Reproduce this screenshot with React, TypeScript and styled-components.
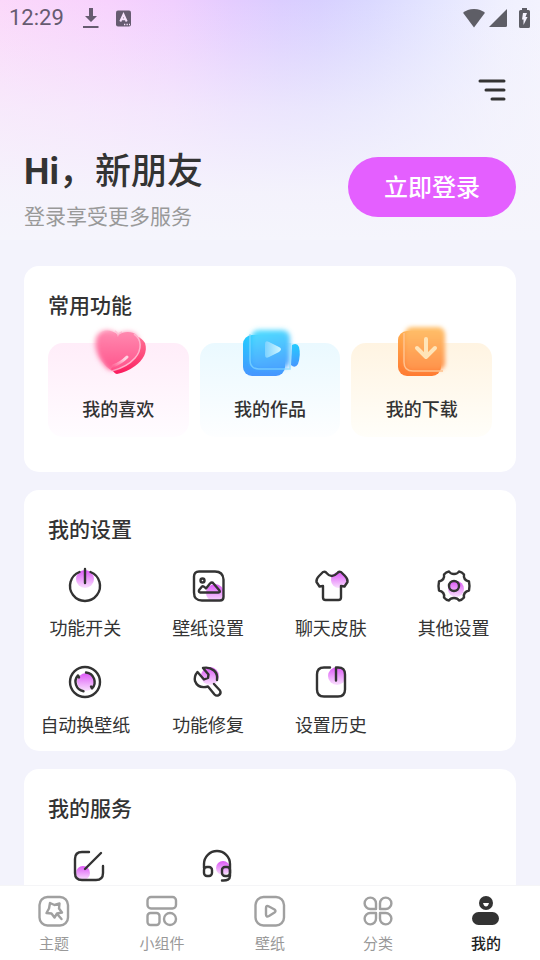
import React from "react";
import styled, { createGlobalStyle } from "styled-components";

const GlobalStyle = createGlobalStyle`
  *, *::before, *::after { box-sizing: border-box; }
  body {
    margin: 0;
    background: #f3f3fc;
    color: #333333;
    font-family: "Noto Sans CJK SC", sans-serif;
  }
  button { font: inherit; color: inherit; border: 0; padding: 0; background: none; cursor: pointer; }
  h1, h2, p { margin: 0; }
  svg { display: block; flex: none; overflow: visible; }
`;

const Screen = styled.div`
  display: flex;
  flex-direction: column;
  height: 100vh;
  overflow: hidden;
`;

const Content = styled.main`
  flex: 1;
  min-height: 0;
  overflow-y: auto;
  scrollbar-width: none;
`;

const Header = styled.header`
  height: 240px;
  background:
    linear-gradient(to bottom, rgba(245, 244, 252, 0) 0%, rgba(245, 244, 252, 0.24) 18%, rgba(245, 244, 252, 0.62) 45%, rgba(245, 244, 252, 0.95) 80%, #f5f5fc 100%),
    linear-gradient(to right, #fbd8fa 0%, #f7d2fd 20%, #f0cffe 32%, #e4ccff 43%, #dbcdff 52%, #d8d0ff 59%, #dad8ff 68%, #e4e5ff 80%, #f0f0fe 93%, #f3f3fe 100%);
`;

const StatusBar = styled.div`
  display: flex;
  align-items: center;
  justify-content: space-between;
  height: 36px;
  padding: 0 10px 0 9px;
  color: #665b70;
`;

const StatusGroup = styled.div<{ $gap: number }>`
  display: flex;
  align-items: center;
  gap: ${(p) => p.$gap}px;
`;

const Clock = styled.span`
  font: 400 22px/36px Roboto, sans-serif;
`;

const Toolbar = styled.div`
  display: flex;
  justify-content: flex-end;
  padding: 38px 32px 0;
`;

const MenuButton = styled.button`
  display: grid;
  place-items: center;
  width: 32px;
  height: 32px;
`;

const Profile = styled.div`
  display: flex;
  align-items: center;
  justify-content: space-between;
  padding: 37px 24px 0;
`;

const Greeting = styled.h1`
  font-size: 36px;
  font-weight: 500;
  line-height: 50px;
`;

const Latin = styled.span`
  font-family: Roboto, sans-serif;
  font-weight: 700;
  line-height: 1;
`;

const Subtitle = styled.p`
  font-size: 21px;
  line-height: 32px;
  padding-top: 6px;
  color: #999999;
`;

const LoginButton = styled.button`
  && {
    width: 168px;
    height: 60px;
    padding-bottom: 4px;
    border-radius: 30px;
    background: #e45fff;
    color: #ffffff;
    font-size: 24px;
    font-weight: 500;
  }
`;

const Cards = styled.div`
  display: flex;
  flex-direction: column;
  gap: 18px;
  padding: 26px 24px 0;
`;

const Card = styled.section<{ $bottom: number }>`
  border-radius: 15px;
  background: #ffffff;
  padding: 24px 0 ${(p) => p.$bottom}px;
`;

const CardTitle = styled.h2`
  padding: 0 24px;
  font-size: 21px;
  font-weight: 500;
  line-height: 28px;
`;

const Tiles = styled.div`
  display: grid;
  grid-template-columns: repeat(3, 1fr);
  gap: 11px;
  padding: 25px 24px 0;
`;

const Tile = styled.button<{ $from: string; $to: string }>`
  && {
    display: flex;
    flex-direction: column;
    align-items: center;
    height: 94px;
    border-radius: 15px;
    background: linear-gradient(to bottom, ${(p) => p.$from}, ${(p) => p.$to});
    font-size: 18px;
    font-weight: 500;
    line-height: 26px;
  }
  svg { margin-top: -20px; margin-bottom: 16px; }
`;

const ActionGrid = styled.div<{ $columns: string }>`
  display: grid;
  grid-template-columns: ${(p) => p.$columns};
  row-gap: 27px;
  padding: 26px 1px 0 0;
`;

const Action = styled.button`
  && {
    display: flex;
    flex-direction: column;
    align-items: center;
    gap: 13px;
    font-size: 18px;
    line-height: 21px;
    white-space: nowrap;
  }
`;

const TabBar = styled.nav`
  display: grid;
  grid-template-columns: repeat(5, 1fr);
  height: 75px;
  flex: none;
  background: #ffffff;
  border-top: 1px solid #f5f5f7;
`;

const Tab = styled.button<{ $active?: boolean }>`
  && {
    display: flex;
    flex-direction: column;
    align-items: center;
    gap: 5px;
    padding-top: 9px;
    font-size: 15px;
    line-height: 22px;
    font-weight: ${(p) => (p.$active ? 500 : 400)};
    color: ${(p) => (p.$active ? "#222222" : "#999999")};
  }
`;

const DownloadIcon = () => (
  <svg width="16" height="22" viewBox="0 0 16 22" fill="currentColor">
    <path d="M6 1h4v8h4l-6 6-6-6h4z" />
    <path d="M0 19h15.500v2H0z" />
  </svg>
);

const KeyboardIcon = () => (
  <svg width="15" height="17" viewBox="0 0 15 17">
    <rect y="0.500" width="15" height="16" rx="2" fill="currentColor" />
    <path d="M4.300 11.500 7.500 4.500l3.200 7M5.400 9.300h4.200" fill="none" stroke="#f7e2fc" strokeWidth="2" />
    <path d="M8 14.500h1.300M10.500 14.500h1.300M13 14.500h1" stroke="#f7e2fc" strokeWidth="1.300" />
  </svg>
);

const WifiIcon = () => (
  <svg width="22" height="19" viewBox="0 0 22 19">
    <path d="M11 0C6.500 0 2.800 1.500 0 3.800L11 18.500 22 3.800C19.200 1.500 15.500 0 11 0Z" fill="#5e5e66" />
  </svg>
);

const SignalIcon = () => (
  <svg width="18" height="18" viewBox="0 0 18 18">
    <path d="M18 0v16.500q0 1.500-1.500 1.500H0Z" fill="#5e5e66" />
  </svg>
);

const BatteryIcon = () => (
  <svg width="11" height="20" viewBox="0 0 11 20">
    <path d="M3 0h5v2h1.500Q11 2 11 3.500v15Q11 20 9.500 20h-8Q0 20 0 18.500v-15Q0 2 1.500 2H3Z" fill="#5e5e66" />
    <path d="M4 5h4L6.500 9H8.500L4.500 17V11.500H3Z" fill="#f5f4ff" />
  </svg>
);

const MenuIcon = () => (
  <svg width="28" height="24" viewBox="0 0 28 24" fill="none" stroke="#333" strokeWidth="3" strokeLinecap="round">
    <path d="M2 3h24M8 12h18M14 21h12" />
  </svg>
);

const HeartIcon = () => (
  <svg width="60" height="56" viewBox="0 -1 60 56">
    <defs>
      <linearGradient id="heartBack" x1="0.800" y1="0" x2="0.400" y2="1">
        <stop offset="0" stopColor="#ff6a90" />
        <stop offset="1" stopColor="#fb1d5e" />
      </linearGradient>
      <linearGradient id="heartFront" gradientUnits="userSpaceOnUse" x1="30" y1="5" x2="30" y2="50">
        <stop offset="0" stopColor="#ff8db2" />
        <stop offset="1" stopColor="#ff4f88" />
      </linearGradient>
      <linearGradient id="heartEdge" gradientUnits="userSpaceOnUse" x1="22" y1="0" x2="50" y2="0">
        <stop offset="0" stopColor="#ffc4d8" stopOpacity="0.500" />
        <stop offset="0.500" stopColor="#ffb4cd" />
      </linearGradient>
      <linearGradient id="heartShine" x1="0" y1="1" x2="1" y2="0">
        <stop offset="0" stopColor="#ffc4d8" stopOpacity="0.100" />
        <stop offset="0.800" stopColor="#ffd3e2" />
      </linearGradient>
      <linearGradient id="heartReveal" gradientUnits="userSpaceOnUse" x1="10" y1="24" x2="30" y2="24">
        <stop offset="0" stopColor="#000" />
        <stop offset="1" stopColor="#fff" />
      </linearGradient>
      <mask id="heartMask" maskUnits="userSpaceOnUse" x="0" y="0" width="60" height="56">
        <rect width="60" height="56" fill="url(#heartReveal)" />
      </mask>
      <filter id="heartBlur" x="-30%" y="-30%" width="160%" height="160%"><feGaussianBlur stdDeviation="2.800" /></filter>
    </defs>
    <path d="M48 12q6 2 9 7c3 9-2 17-10 23q-8 6-18 8-2 0-6-5Z" fill="url(#heartBack)" />
    <path d="M30 11C23 4 11 5 8 14 5 27 14 40 22 46c16-4 28-13 29-26C52 8 39 5 30 11Z" fill="url(#heartFront)" filter="url(#heartBlur)" />
    <path d="M30 11C23 4 11 5 8 14 5 27 14 40 24 47c16-4 28-13 28-26C53 8 39 5 30 11Z" fill="url(#heartFront)" mask="url(#heartMask)" />
    <path d="M27 7q2 1 3 4 1-2 4-3M46 10c8 5 8 16 1 24q-8 9-23 13" fill="none" stroke="url(#heartEdge)" strokeWidth="1.500" />
    <path d="M25 42q8-3 14-9" fill="none" stroke="url(#heartShine)" strokeWidth="3" strokeLinecap="round" />
  </svg>
);

const VideoIcon = () => (
  <svg width="60" height="56" viewBox="0 0 60 56">
    <defs>
      <linearGradient id="videoBack" x1="0" y1="0" x2="0" y2="1">
        <stop offset="0" stopColor="#22ccff" />
        <stop offset="1" stopColor="#4796ff" />
      </linearGradient>
      <linearGradient id="videoFront" x1="0.300" y1="0" x2="0.500" y2="1">
        <stop offset="0" stopColor="#50dcff" />
        <stop offset="1" stopColor="#4da5ff" />
      </linearGradient>
      <linearGradient id="videoPlay" x1="0" y1="0" x2="1" y2="0">
        <stop offset="0" stopColor="#7dd2ff" />
        <stop offset="1" stopColor="#d2f7ff" />
      </linearGradient>
      <filter id="videoBlur" x="-20%" y="-20%" width="140%" height="140%"><feGaussianBlur stdDeviation="2.800" /></filter>
    </defs>
    <path d="M52 22q5-3 7 2 2 8-1 17-3 5-7 1Z" fill="url(#videoBack)" />
    <rect x="3" y="12" width="42" height="41" rx="9" fill="url(#videoBack)" />
    <rect x="11" y="7" width="39" height="38" rx="8" fill="url(#videoFront)" filter="url(#videoBlur)" />
    <path d="M10 11v26q0 9 9 9h31V20" fill="none" stroke="#83d8ff" strokeWidth="1.500" strokeOpacity="0.700" />
    <path d="M25 21q0-4 4-2l10 5q4 2 0 5l-10 5q-4 2-4-2Z" fill="url(#videoPlay)" />
  </svg>
);

const SaveIcon = () => (
  <svg width="60" height="56" viewBox="0 3 60 56">
    <defs>
      <linearGradient id="saveBack" x1="0" y1="0" x2="0" y2="1">
        <stop offset="0" stopColor="#ffad50" />
        <stop offset="1" stopColor="#ff7b32" />
      </linearGradient>
      <linearGradient id="saveFront" x1="0.500" y1="0" x2="0.500" y2="1">
        <stop offset="0" stopColor="#ffc06a" />
        <stop offset="1" stopColor="#ff924b" />
      </linearGradient>
      <filter id="saveBlur" x="-20%" y="-20%" width="140%" height="140%"><feGaussianBlur stdDeviation="2" /></filter>
    </defs>
    <rect x="6" y="11" width="43" height="45" rx="9" fill="url(#saveBack)" />
    <rect x="13" y="7" width="40" height="43" rx="7" fill="url(#saveFront)" filter="url(#saveBlur)" />
    <path d="M12 13v29q0 9 9 9h30" fill="none" stroke="#ffc28f" strokeWidth="1.500" />
    <path d="M34 19v18M25 28l9 9 9-9" fill="none" stroke="#ffe4b8" strokeWidth="4" strokeLinecap="round" strokeLinejoin="round" />
  </svg>
);

function ActionIcon({ cx, cy, r = 9, children }: { cx: number; cy: number; r?: number; children: React.ReactNode }) {
  const id = React.useId();
  return (
    <svg width="36" height="36" viewBox="0 0 36 36" fill="none" stroke="#333" strokeWidth="2.400" strokeLinecap="round" strokeLinejoin="round">
      <linearGradient id={id} x1="0" y1="0" x2="0" y2="1">
        <stop offset="0" stopColor="#dd57f6" />
        <stop offset="1" stopColor="#f9e0fe" />
      </linearGradient>
      <circle cx={cx} cy={cy} r={r} fill={`url(#${id})`} stroke="none" />
      {children}
    </svg>
  );
}

const settings = [
  { label: "功能开关", icon: <ActionIcon cx={18} cy={11}><path d="M12.500 4a15 15 0 1 0 11 0M18 1v14" /></ActionIcon> },
  { label: "壁纸设置", icon: <ActionIcon cx={25} cy={25}><path d="M9 3.500h16q8 0 8.500 8V29q0 3.500-3.500 3.500H12q-8 0-8-8v-16q0-5 5-5Z" /><circle cx="12.500" cy="12.500" r="2" /><path d="M10 24.500q-2-1-.5-3l2.500-3q1-1 3 1l1 1 4-5q2-2 3.500 0l6 7q1 2-1 2Z" /></ActionIcon> },
  { label: "聊天皮肤", icon: <ActionIcon cx={26} cy={12} r={8}><path d="M10 4q2.500-1 3.500 1 5 6 11 0 1-2 3.500-1l4 4q3 3 2.500 6l-3 4.500-3.500-.5v11.500q0 2.500-2.500 2.500h-13q-2.500 0-2.500-2.500V18l-3.500.5-3-4.500q-.5-3 2.500-6Z" /></ActionIcon> },
  { label: "其他设置", icon: <ActionIcon cx={20} cy={21} r={8}><path d="M13 3.500q1.500 2.500 5 2.500t5-2.500q3 .5 5 3-1 5.500 5 7 1 4.500 0 9-6 1.500-5 7-2 2.500-5 3-1.500-2.500-5-2.500t-5 2.500q-3-.5-5-3 1-5.500-5-7-1-4.500 0-9 6-1.500 5-7 2-2.500 5-3Z" /><circle cx="18" cy="18" r="5" /></ActionIcon> },
  { label: "自动换壁纸", icon: <ActionIcon cx={19} cy={17}><circle cx="18" cy="17" r="15" /><path d="M16.500 26.200a9.500 9.500 0 0 1-5.500-15.800l1 2M19 7.500a9.500 9.500 0 0 1 6 16l-1-2" /></ActionIcon> },
  { label: "功能修复", icon: <ActionIcon cx={20} cy={11}><path d="M27 15q1-6-3-9.500-5-4-11-2.500l5.500 6.500-.5 3.500-4 1.500L7.500 7q-3.500 4-2.500 9 3 8 13 5.500l6.500 8q2 2 4.500.5 2.500-2 1-4.500L24 19" /></ActionIcon> },
  { label: "设置历史", icon: <ActionIcon cx={24} cy={11}><path d="M17 2.500H11q-7 0-7 7v15q0 7 7 7h14q7 0 7-7v-15q0-7-7-7h-2v13" /></ActionIcon> },
];

const services = [
  { label: "意见反馈", icon: <ActionIcon cx={13} cy={26} r={7}><path d="M19 5h-7q-7 0-7 7v14q0 7 7 7h14q7 0 7-7v-7M31 6 15 22" /></ActionIcon> },
  { label: "联系客服", icon: <ActionIcon cx={25} cy={21} r={7}><path d="M6 21v-4a13 13 0 0 1 26 0v12q0 5-8 4.500" /><rect x="6" y="20" width="8" height="9" rx="3" /><rect x="24" y="20" width="8" height="9" rx="3" /></ActionIcon> },
];

const TabIcon = ({ children }: { children: React.ReactNode }) => (
  <svg width="32" height="32" viewBox="0 0 32 32" fill="none" stroke="#a0a0a0" strokeWidth="2.400" strokeLinecap="round" strokeLinejoin="round">
    {children}
  </svg>
);

const tabs = [
  { label: "主题", icon: <TabIcon><rect x="1.500" y="2" width="28.500" height="28.500" rx="8" /><path d="m12 8 4.500 2 5-1.500-.5 5 3 4-5 1-2.500 4-3-4-5-.5 2.500-4.500ZM20 20l3.500 4" /></TabIcon> },
  { label: "小组件", icon: <TabIcon><rect x="1.500" y="2" width="28.500" height="11.500" rx="3.500" /><rect x="1.500" y="18" width="12" height="12" rx="3" /><circle cx="24" cy="24" r="6" /></TabIcon> },
  { label: "壁纸", icon: <TabIcon><rect x="1.500" y="2" width="28.500" height="28.500" rx="8" /><path d="M12 13q0-3 3-1.500l5.500 3q2 1.500 0 3L15 21q-3 1.500-3-1.500Z" /></TabIcon> },
  { label: "分类", icon: <TabIcon><path d="M14 14H8.500a5.700 5.700 0 1 1 5.500-5.500ZM18 14V8.500A5.700 5.700 0 1 1 23.500 14ZM14 18v5.500A5.700 5.700 0 1 1 8.500 18ZM18 18h5.500a5.700 5.700 0 1 1-5.500 5.500Z" /></TabIcon> },
  { label: "我的", icon: <TabIcon><g stroke="none"><circle cx="16" cy="8" r="7" fill="#333" /><rect x="2" y="17" width="27" height="13" rx="6.500" fill="#333" /><path d="M13 8h6q-1 3.500-3 3.500T13 8Z" fill="#fff" /></g></TabIcon>, active: true },
];

export default function App() {
  return (
    <Screen>
      <GlobalStyle />
      <Content>
        <Header>
          <StatusBar>
            <StatusGroup $gap={19}>
              <Clock>12:29</Clock>
              <StatusGroup $gap={17}><DownloadIcon /><KeyboardIcon /></StatusGroup>
            </StatusGroup>
            <StatusGroup $gap={12}>
              <StatusGroup $gap={4}><WifiIcon /><SignalIcon /></StatusGroup>
              <BatteryIcon />
            </StatusGroup>
          </StatusBar>
          <Toolbar><MenuButton aria-label="菜单"><MenuIcon /></MenuButton></Toolbar>
          <Profile>
            <div>
              <Greeting><Latin>Hi</Latin>，新朋友</Greeting>
              <Subtitle>登录享受更多服务</Subtitle>
            </div>
            <LoginButton>立即登录</LoginButton>
          </Profile>
        </Header>
        <Cards>
          <Card $bottom={35}>
            <CardTitle>常用功能</CardTitle>
            <Tiles>
              <Tile $from="#ffedf9" $to="#fffcff"><HeartIcon />我的喜欢</Tile>
              <Tile $from="#eaf9ff" $to="#fdfeff"><VideoIcon />我的作品</Tile>
              <Tile $from="#fff4e2" $to="#fffef9"><SaveIcon />我的下载</Tile>
            </Tiles>
          </Card>
          <Card $bottom={16}>
            <CardTitle>我的设置</CardTitle>
            <ActionGrid $columns="repeat(4, 1fr)">
              {settings.map((s) => <Action key={s.label}>{s.icon}{s.label}</Action>)}
            </ActionGrid>
          </Card>
          <Card $bottom={48}>
            <CardTitle>我的服务</CardTitle>
            <ActionGrid $columns="repeat(auto-fill, 128px)">
              {services.map((s) => <Action key={s.label} aria-label={s.label}>{s.icon}</Action>)}
            </ActionGrid>
          </Card>
        </Cards>
      </Content>
      <TabBar>
        {tabs.map((t) => (
          <Tab key={t.label} $active={t.active} aria-current={t.active ? "page" : undefined}>{t.icon}{t.label}</Tab>
        ))}
      </TabBar>
    </Screen>
  );
}
